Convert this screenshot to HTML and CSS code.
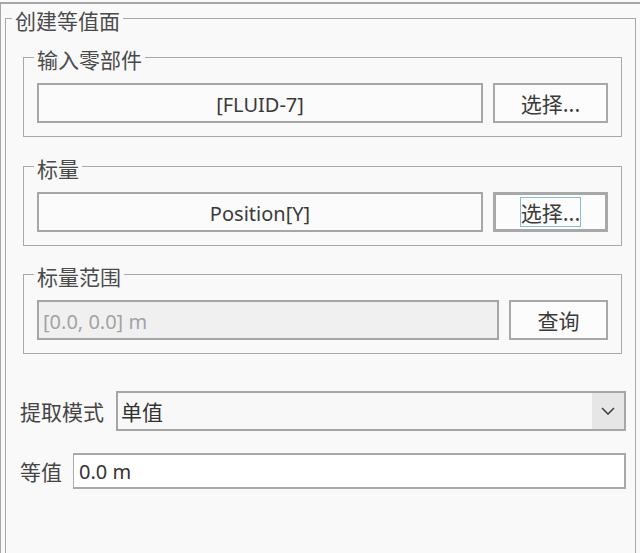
FILE: index.html
```html
<!DOCTYPE html>
<html lang="zh">
<head>
<meta charset="utf-8">
<title>创建等值面</title>
<link rel="stylesheet" href="styles.css">
</head>
<body>
<div class="window">
  <fieldset class="group outer">
    <legend class="legend">创建等值面</legend>

    <fieldset class="group inner first">
      <legend class="legend">输入零部件</legend>
      <div class="pick-row">
        <div class="field">[FLUID-7]</div>
        <button class="btn" type="button">选择...</button>
      </div>
    </fieldset>

    <fieldset class="group inner">
      <legend class="legend">标量</legend>
      <div class="pick-row">
        <div class="field">Position[Y]</div>
        <button class="btn btn-default" type="button"><span class="focus-rect">选择...</span></button>
      </div>
    </fieldset>

    <fieldset class="group inner range">
      <legend class="legend">标量范围</legend>
      <div class="pick-row">
        <div class="field field-disabled">[0.0, 0.0] m</div>
        <button class="btn btn-query" type="button">查询</button>
      </div>
    </fieldset>

    <div class="form-row mode-row">
      <span class="label">提取模式</span>
      <div class="combo">
        <span class="combo-text">单值</span>
        <span class="combo-arrow">
          <svg width="14" height="8" viewBox="0 0 14 8"><polyline points="1,1 7,7 13,1" fill="none" stroke="#444" stroke-width="1.6"/></svg>
        </span>
      </div>
    </div>

    <div class="form-row value-row">
      <span class="label">等值</span>
      <div class="input">0.0 m</div>
    </div>
  </fieldset>
</div>
</body>
</html>
```

FILE: styles.css
```css
html, body {
  margin: 0;
  padding: 0;
  background: #f9f9f9;
}
body {
  font-family: "Noto Sans", "Noto Sans CJK SC", sans-serif;
  font-size: 20px;
  color: #3a3a3a;
  overflow: hidden;
}
.window {
  margin-top: 2px;
  border-top: 2px solid #a6a6a6;
  border-left: 1px solid #a6a6a6;
  height: calc(100vh - 2px);
  box-sizing: border-box;
  overflow: hidden;
}
.group {
  margin: 0;
  border: 1px solid #a8a8a8;
  min-width: 0;
}
.legend {
  font-family: "Noto Sans CJK SC", sans-serif;
  font-size: 21px;
  line-height: 22px;
  padding: 3px 3px 0 3px;
  color: #4a4a4a;
}
.outer {
  margin: 2px 4px 0 4px;
  padding: 14px 9px 0 14px;
  height: 600px;
  box-sizing: border-box;
}
.outer > .legend {
  margin-left: -8px;
}
.inner {
  margin: 17px 4px 0 3px;
  padding: 13px 13px 13px 13px;
}
.inner.first {
  margin-top: 0;
}
.inner.range {
  margin-top: 16px;
}
.inner > .legend {
  margin-left: -3px;
}
.pick-row {
  display: flex;
  gap: 10px;
}
.field {
  flex: 1;
  height: 40px;
  box-sizing: border-box;
  border: 2px solid #a6a6a6;
  background: #fbfbfb;
  display: flex;
  align-items: center;
  justify-content: center;
  line-height: 1;
  padding-top: 3px;
}
.field-disabled {
  justify-content: flex-start;
  padding-left: 4px;
  background: #f0f0f0;
  color: #a3a3a3;
}
.btn {
  width: 115px;
  height: 40px;
  box-sizing: border-box;
  border: 2px solid #a8a8a8;
  background: #fcfcfc;
  font-family: "Noto Sans CJK SC", sans-serif;
  font-size: 21px;
  color: #3a3a3a;
  padding: 0;
  display: flex;
  align-items: center;
  justify-content: center;
}
.btn-default {
  border-width: 3px;
}
.focus-rect {
  border: 1px solid #8bbccc;
  padding: 1px 0 1px 0;
  line-height: 26px;
}
.btn-query {
  width: 99px;
}
.form-row {
  display: flex;
  align-items: center;
  gap: 11px;
}
.label {
  font-family: "Noto Sans CJK SC", sans-serif;
  font-size: 21px;
  color: #444;
}
.mode-row {
  margin-top: 37px;
  gap: 12px;
}
.value-row {
  margin-top: 22px;
}
.combo {
  flex: 1;
  height: 40px;
  box-sizing: border-box;
  border: 2px solid #a6a6a6;
  background: #f8f8f8;
  display: flex;
  align-items: stretch;
}
.combo-text {
  flex: 1;
  display: flex;
  align-items: center;
  padding-left: 3px;
  font-family: "Noto Sans CJK SC", sans-serif;
  font-size: 21px;
  color: #333;
}
.combo-arrow {
  width: 32px;
  background: #e6e6e6;
  display: flex;
  align-items: center;
  justify-content: center;
}
.input {
  flex: 1;
  height: 36px;
  box-sizing: border-box;
  border: 2px solid #a9a9a9;
  border-left-width: 1px;
  background: #ffffff;
  display: flex;
  align-items: center;
  padding-left: 5px;
  color: #333;
}
```
